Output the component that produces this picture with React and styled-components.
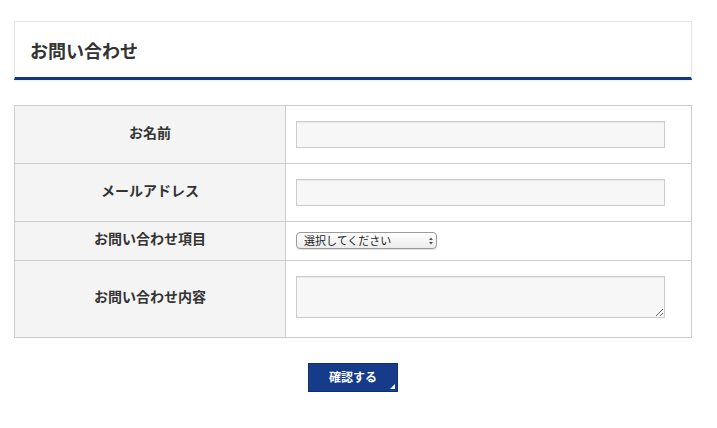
import React, { useState } from 'react';
import styled, { createGlobalStyle } from 'styled-components';

const GlobalStyle = createGlobalStyle`
  body {
    margin: 0;
    background: #fff;
    font-family: "Noto Sans CJK JP", "Noto Sans", sans-serif;
    color: #333;
  }
`;

const Page = styled.div`
  width: 678px;
  padding: 21px 0 0 14px;
`;

const Header = styled.div`
  height: 55px;
  display: flex;
  align-items: center;
  padding-left: 15px;
  border: 1px solid #e6e6e6;
  border-bottom: 3px solid #13377f;
  box-shadow: 0 1px 2px rgba(0, 0, 0, 0.06);
`;

const Title = styled.h2`
  margin: 0;
  font-size: 18px;
  font-weight: 700;
  color: #333;
  line-height: 1;
`;

const Form = styled.form`
  margin-top: 25px;
`;

const Table = styled.table`
  width: 100%;
  border-collapse: collapse;
  border: 1px solid #ccc;
`;

const LabelCell = styled.th`
  width: 270px;
  background: #f4f4f4;
  border: 1px solid #ccc;
  font-size: 14px;
  font-weight: 700;
  color: #333;
  text-align: center;
  vertical-align: middle;
  padding: 0 0 6px;
`;

const ValueCell = styled.td`
  border: 1px solid #ccc;
  padding: ${(p) => p.$pad || '15px 10px'};
  vertical-align: middle;
  text-align: left;
`;

const Input = styled.input`
  display: block;
  box-sizing: border-box;
  width: 369px;
  height: 27px;
  margin: 0;
  border: 1px solid #ccc;
  background: #f7f7f7;
  box-shadow: inset 0 1px 1px rgba(0, 0, 0, 0.06);
  font-size: 13px;
  padding: 0 6px;
  outline: none;
`;

const TextArea = styled.textarea`
  display: block;
  box-sizing: border-box;
  width: 369px;
  height: 42px;
  margin: 0 0 4px;
  border: 1px solid #ccc;
  background: #f7f7f7;
  box-shadow: inset 0 1px 1px rgba(0, 0, 0, 0.06);
  font-size: 13px;
  padding: 4px 6px;
  outline: none;
  resize: both;
`;

const SelectWrap = styled.div`
  position: relative;
  width: 141px;
  height: 17px;
`;

const Select = styled.select`
  appearance: none;
  -webkit-appearance: none;
  display: block;
  box-sizing: border-box;
  width: 141px;
  height: 17px;
  margin: 0;
  padding: 0 0 0 7px;
  border: 1px solid #9a9a9a;
  border-radius: 4px;
  background: linear-gradient(#ffffff, #ececec);
  box-shadow: 0 1px 1px rgba(0, 0, 0, 0.12);
  font-family: "Noto Sans CJK JP", sans-serif;
  font-size: 11px;
  line-height: 15px;
  color: #222;
  outline: none;
`;

const Arrows = styled.svg`
  position: absolute;
  right: 4px;
  top: 5px;
  pointer-events: none;
`;

const Actions = styled.div`
  display: flex;
  justify-content: center;
  margin-top: 25px;
`;

const SubmitButton = styled.button`
  position: relative;
  width: 90px;
  height: 29px;
  border: 1px solid #0f2f72;
  background: #153b8a;
  color: #fff;
  font-family: "Noto Sans CJK JP", sans-serif;
  font-size: 12px;
  font-weight: 700;
  cursor: pointer;
  padding: 0 0 2px;

  &::after {
    content: '';
    position: absolute;
    right: 2px;
    bottom: 2px;
    border-style: solid;
    border-width: 0 0 5px 5px;
    border-color: transparent transparent #fff transparent;
  }
`;

const App = () => {
  const [formData, setFormData] = useState({ name: '', email: '', type: '', body: '' });

  const handleChange = (e) => {
    const { name, value } = e.target;
    setFormData((prev) => ({ ...prev, [name]: value }));
  };

  return (
    <Page>
      <GlobalStyle />
      <Header>
        <Title>お問い合わせ</Title>
      </Header>
      <Form onSubmit={(e) => e.preventDefault()}>
        <Table>
          <tbody>
            <tr>
              <LabelCell>お名前</LabelCell>
              <ValueCell>
                <Input type="text" name="name" value={formData.name} onChange={handleChange} />
              </ValueCell>
            </tr>
            <tr>
              <LabelCell>メールアドレス</LabelCell>
              <ValueCell>
                <Input type="email" name="email" value={formData.email} onChange={handleChange} />
              </ValueCell>
            </tr>
            <tr>
              <LabelCell>お問い合わせ項目</LabelCell>
              <ValueCell $pad="10px 10px 11px">
                <SelectWrap>
                  <Select name="type" value={formData.type} onChange={handleChange}>
                    <option value="">選択してください</option>
                    <option value="service">サービスについて</option>
                    <option value="other">その他</option>
                  </Select>
                  <Arrows width="4" height="8" viewBox="0 0 4 8">
                    <path d="M0 3 L2 0.5 L4 3 Z" fill="#555" />
                    <path d="M0 5 L2 7.5 L4 5 Z" fill="#555" />
                  </Arrows>
                </SelectWrap>
              </ValueCell>
            </tr>
            <tr>
              <LabelCell>お問い合わせ内容</LabelCell>
              <ValueCell>
                <TextArea name="body" value={formData.body} onChange={handleChange} />
              </ValueCell>
            </tr>
          </tbody>
        </Table>
        <Actions>
          <SubmitButton type="submit">確認する</SubmitButton>
        </Actions>
      </Form>
    </Page>
  );
};

export default App;
